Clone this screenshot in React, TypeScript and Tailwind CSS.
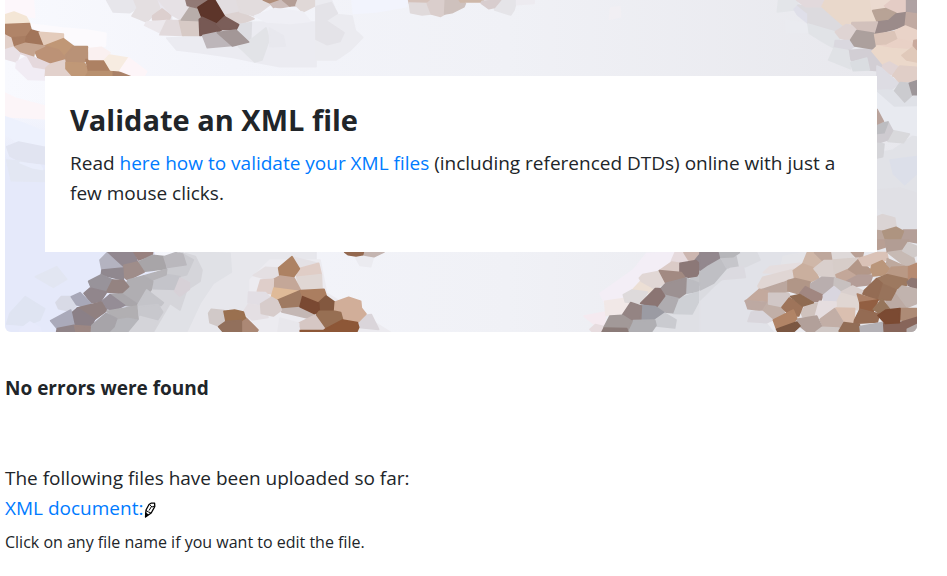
type Cell = [fill: string, points: string];

const topLeft: Cell[] = [
  ["#fdf7fb", "15,0 100,0 104,52 70,48 42,36 15,40"],
  ["#fcfafd", "90,72 190,84 260,90 318,100 316,138 266,146 190,116 190,102 118,97"],
  ["#f4e6d6", "15,45 42,36 78,50 90,72 18,76"],
  ["#b08468", "15,74 88,71 94,92 80,110 32,114 15,100"],
  ["#a97d62", "32,114 80,110 76,130 40,142"],
  ["#a2755a", "94,90 118,97 136,140 76,130 80,110"],
  ["#e4ccbc", "118,97 190,102 190,116 134,138"],
  ["#c09776", "190,116 222,140 200,170 176,172 150,150 134,138"],
  ["#bc9276", "134,138 176,150 200,180 150,193 116,178 104,152"],
  ["#c6a590", "40,142 76,130 134,138 104,152 100,172 60,158"],
  ["#e2d0c9", "15,106 32,114 40,142 15,150"],
  ["#e9e1e6", "15,150 40,142 60,160 50,186 15,176"],
  ["#f1ecf4", "50,186 82,168 100,200 136,206 136,240 84,238 48,204"],
  ["#e5d8dc", "62,160 100,172 150,193 136,206 100,200 82,168"],
  ["#e2d1cc", "150,193 196,180 198,206 216,228 136,228 138,204"],
  ["#b99277", "220,140 262,140 267,178 244,190 200,188 196,166"],
  ["#c09877", "198,188 254,190 266,212 258,226 216,226 198,206"],
  ["#ad8163", "258,179 312,178 332,213 266,215"],
  ["#b8906f", "266,215 340,215 358,228 258,228"],
  ["#a98168", "340,215 364,213 400,228 340,228"],
  ["#faf0f0", "267,146 304,142 330,158 316,178 267,178"],
  ["#f7ece1", "314,180 328,165 384,174 386,190 360,212 332,210"],
  ["#fdf5f8", "386,174 440,214 432,228 400,228 360,212"],
  ["#ebebf1", "530,150 600,158 700,172 764,186 840,200 948,200 948,66 750,66 600,110 500,114"],
  ["#e7e6eb", "320,0 402,0 412,24 390,38 340,36"],
  ["#e4dfe1", "402,0 475,0 486,18 458,48 440,66 396,48 412,24"],
  ["#e9e6ed", "475,0 512,20 515,60 486,28"],
  ["#dccfce", "486,27 512,46 508,62 458,60 458,48"],
  ["#ece8ec", "440,66 500,62 480,98 434,76"],
  ["#e2dadc", "500,62 540,62 550,106 480,104"],
  ["#e6e1e5", "475,0 560,0 570,22 544,60 515,44"],
  ["#d7cac6", "538,62 598,62 600,106 548,106"],
  ["#b8adaa", "544,60 570,22 602,28 606,62"],
  ["#927a76", "558,0 626,0 594,24 562,16"],
  ["#e2dde0", "644,0 710,0 720,36 674,44"],
  ["#dcd2d1", "674,46 722,36 762,56 716,74"],
  ["#dddde2", "716,74 754,68 752,116 742,122 708,90"],
  ["#e2dcdd", "710,0 796,0 812,12 764,48 720,36"],
  ["#e2e3e7", "716,140 746,124 798,84 808,118 786,180 764,186"],
  ["#5d352a", "628,0 644,0 674,50 650,72 604,48 594,22"],
  ["#775954", "598,58 606,52 650,72 666,88 650,100 600,106"],
  ["#7b5e59", "650,72 674,50 716,74 708,90 666,88"],
  ["#bdb6ba", "608,107 650,98 698,136 622,143"],
  ["#a39797", "652,98 708,90 746,126 698,138"],
  ["#b08d79", "790,0 846,0 812,10"],
  ["#cdbdba", "812,12 846,0 870,18 824,26"],
  ["#b49e96", "848,0 894,0 888,16 870,18"],
  ["#e0d8d7", "894,0 948,0 948,16 908,36 888,16"],
  ["#efeff5", "764,48 824,26 908,36 930,64 870,70 800,66"],
  ["#e8e8ee", "808,84 850,108 856,138 810,140"],
];

const topMiddle: Cell[] = [
  ["#ebebf0", "0,0 46,0 64,44 108,48 118,92 140,112 104,150 60,180 0,180"],
  ["#e4e3e8", "0,20 46,8 64,40 30,62 84,98 72,124 34,134 0,118"],
  ["#f2f4fd", "108,0 276,0 270,20 180,36 112,40"],
  ["#d5c2bb", "278,0 346,0 334,11 280,9"],
  ["#e0dadb", "280,9 334,11 346,42 318,45 284,38"],
  ["#dacecc", "334,11 346,0 388,0 386,42 374,49 346,42"],
  ["#e5e4e8", "554,0 602,0 594,30 584,45 536,30 536,22"],
  ["#cec1bd", "388,0 430,0 448,10 444,20 408,38 386,42"],
  ["#ceb8a9", "430,0 502,0 496,6 434,6"],
  ["#d8cdce", "498,4 554,0 536,22 518,26 496,10"],
  ["#edebf0", "602,0 655,0 654,10 602,14"],
  ["#f1eff3", "884,24 912,20 914,50 880,58"],
];

const topRight: Cell[] = [
  ["#eaebf0", "460,60 528,72 530,96 464,98"],
  ["#e3e5e9", "440,0 494,0 498,16 486,30 436,36"],
  ["#dfdfe9", "486,28 500,14 528,40 528,70 496,44"],
  ["#dcdade", "498,16 520,18 570,20 600,50 636,76 612,96 528,70 528,40"],
  ["#e2d9dc", "494,0 580,0 570,20 520,20"],
  ["#e9d8cb", "580,0 720,0 724,30 738,64 660,68 634,76 602,48 570,20"],
  ["#ebdad0", "716,0 780,0 758,18 762,28 720,32"],
  ["#e4ccc5", "780,0 824,0 824,38 790,40 758,18"],
  ["#afa2a3", "824,0 855,0 855,40 824,38"],
  ["#b8a396", "722,32 762,26 792,40 770,60 736,66"],
  ["#9b8b8a", "736,66 770,62 792,42 824,38 820,78 726,104"],
  ["#c1aaa2", "824,38 855,42 855,92 820,76"],
  ["#e1e3e7", "528,72 610,96 624,114 606,144 570,124 532,100"],
  ["#d2c1bc", "660,68 736,66 726,100 674,92 658,80"],
  ["#dfd4d3", "610,96 642,74 658,76 674,92 654,122 624,114"],
  ["#dad8df", "610,122 652,122 668,138 648,152 606,148"],
  ["#d2ced4", "648,152 720,146 720,154 754,194 738,212 712,210 700,174 658,182"],
  ["#aca09d", "656,120 674,92 726,100 736,140 720,146 668,138"],
  ["#dbc4b8", "728,104 790,94 800,116 764,136 734,138"],
  ["#e9d3c8", "790,92 820,78 855,92 855,126 840,122 800,118"],
  ["#e9d1c6", "734,138 764,136 800,118 846,128 842,144 780,146"],
  ["#ebd8ca", "720,154 736,138 780,146 840,150 810,170 855,186 855,204 800,202 754,194"],
  ["#e0c9ba", "810,166 844,140 855,152 855,186 824,180"],
  ["#c9aa9d", "846,122 855,120 855,148 844,136"],
  ["#e0e2e6", "606,144 648,152 656,206 590,180"],
  ["#dadde1", "656,188 704,174 712,210 664,212"],
  ["#e1d4d4", "754,194 772,186 800,202 782,224 748,214"],
  ["#e0cec7", "800,202 855,206 855,240 782,228"],
];

const rightEdge: Cell[] = [
  ["#e1e2e7", "51,280 100,270 171,220 171,508 51,508"],
  ["#dddce3", "51,18 64,24 104,60 120,68 90,92 51,92"],
  ["#e0cec7", "100,46 120,18 171,22 171,62 120,68"],
  ["#e8eaf0", "51,92 104,130 171,138 171,226 94,214 70,184 51,150"],
  ["#dfe1e7", "51,92 80,90 104,92 134,126 171,106 171,136 104,138"],
  ["#cbcbcf", "104,92 120,68 148,70 158,104 134,126"],
  ["#9d9699", "148,70 171,62 171,104 158,104"],
  ["#d9d9dc", "98,212 148,222 130,248 84,244"],
  ["#cecbd0", "84,186 98,212 82,240 51,250 51,222"],
  ["#bdbdc1", "51,192 84,186 72,218 51,220"],
  ["#b9a39c", "51,148 70,184 51,192"],
  ["#d4d4d8", "51,250 72,252 68,290 51,294"],
  ["#dcdfe9", "90,300 171,290 171,340 134,374 100,340"],
  ["#e0e0e5", "51,390 120,384 171,400 171,510 120,508 51,440"],
  ["#dbd4d4", "51,470 66,464 104,474 108,500 68,512 51,508"],
  ["#bba69c", "51,512 70,514 78,542 51,560"],
  ["#b49f98", "130,510 171,510 171,548 120,540"],
  ["#ae9480", "68,514 108,502 130,514 120,540 78,542"],
];

const leftEdge: Cell[] = [
  ["#fcf5f8", "15,100 50,116 126,136 134,138 134,176 15,170"],
  ["#edf1fd", "15,170 70,190 134,216 134,256 50,246 15,220"],
  ["#e1e4f1", "20,260 56,246 134,262 134,312 60,304 30,288"],
  ["#e3e7f3", "20,300 60,304 134,332 134,364 34,362"],
  ["#e9edfb", "60,308 120,316 128,328 100,324"],
];

const bottomLeft: Cell[] = [
  ["#dfe4f2", "30,220 76,170 134,206 120,240 80,256 20,252"],
  ["#e2e6f2", "106,110 170,80 200,118 160,142"],
  ["#e7eafb", "60,268 90,246 120,264 124,276 60,276"],
  ["#e7e7ec", "640,36 948,36 948,276 500,276 540,210 600,120"],
  ["#e0e1e6", "560,36 690,40 694,96 640,130 600,190 560,276 380,276 480,120"],
  ["#d5d5da", "540,36 586,50 606,90 600,124 560,150 540,210 510,190 460,276 370,276 470,120"],
  ["#cbcbd0", "548,42 580,60 560,104 498,120 498,82"],
  ["#b4b3c0", "322,38 372,80 306,90 300,60"],
  ["#928890", "324,36 402,36 412,66 372,80"],
  ["#98817f", "402,36 458,38 456,46 416,60"],
  ["#a8a5a8", "416,66 458,46 492,50 498,86 430,94"],
  ["#bab8bd", "492,50 526,38 548,42 558,74 502,82"],
  ["#9f8d8a", "372,76 412,66 432,96 384,120 368,108"],
  ["#90888f", "306,90 368,84 370,120 304,104"],
  ["#98939a", "266,124 304,104 338,120 320,156 276,148"],
  ["#c4c4ca", "458,120 500,104 540,110 530,148 460,146"],
  ["#b5b3b7", "430,108 500,88 498,104 456,120"],
  ["#b0aeb2", "384,120 430,108 458,124 454,148 414,194 366,162"],
  ["#948381", "338,120 372,122 386,140 364,160 320,156"],
  ["#d7d1d7", "540,114 568,128 568,148 540,168 524,154"],
  ["#91868c", "252,160 270,144 320,156 302,184 274,188"],
  ["#d8dae6", "168,188 184,170 214,170 230,194 214,214 176,206"],
  ["#a8a8b8", "214,170 240,158 272,190 252,202 230,194"],
  ["#a9a6aa", "330,164 366,162 414,194 410,200 374,196"],
  ["#958d96", "306,184 330,164 374,196 346,210 320,206"],
  ["#908080", "232,204 304,186 320,212 284,238 244,216"],
  ["#8b8087", "214,220 232,204 284,238 274,258 222,256"],
  ["#aaaaba", "152,242 212,210 222,256 172,266"],
  ["#908488", "172,266 222,256 228,276 170,276"],
  ["#9c8783", "224,257 270,260 276,276 228,276"],
  ["#c4c4c9", "414,194 440,150 490,188 484,196 414,200"],
  ["#c8c8cd", "414,200 474,194 488,216 470,244 420,228"],
  ["#d4d4d9", "384,276 420,230 474,244 458,276"],
  ["#b6b6bb", "350,240 384,230 414,238 382,276 326,276"],
  ["#b1afb2", "320,214 410,198 414,236 384,230 350,236"],
  ["#a7a4a9", "276,256 318,220 350,236 342,260 326,276 274,276"],
];

const bottomCentre: Cell[] = [
  ["#ecebf0", "180,276 180,120 240,60 390,60 410,160 600,276"],
  ["#e4dfe2", "190,106 226,82 266,84 270,110 240,120"],
  ["#e4e1e5", "310,52 384,70 328,86"],
  ["#e0cdc6", "328,86 386,70 394,104 320,110"],
  ["#e0d7d4", "320,112 394,104 396,148 332,152"],
  ["#ad8263", "306,50 328,86 310,112 270,108 266,84"],
  ["#c4a798", "252,118 270,108 312,114 332,152 294,156 252,144"],
  ["#dfceca", "202,154 212,120 250,118 248,162"],
  ["#dfba98", "252,144 326,154 262,178 244,172"],
  ["#c4b7b4", "272,202 330,200 376,222 352,234 276,216"],
  ["#9f7a62", "264,180 330,152 338,170 330,198 276,202"],
  ["#ab7e60", "332,152 402,148 408,166 386,188 338,170"],
  ["#83583f", "386,188 408,168 436,188 434,214 388,214"],
  ["#7a4932", "338,170 386,190 388,216 376,222 330,200"],
  ["#d6c7c4", "326,250 378,224 408,262 404,272 334,270"],
  ["#dad5da", "500,252 526,226 544,224 566,268 506,262"],
  ["#d1ae99", "436,186 476,172 512,184 514,204 528,222 500,250 456,236 434,212"],
  ["#976f53", "380,224 388,214 434,214 452,218 458,240 410,266"],
  ["#8d5737", "408,266 458,240 502,248 506,262 500,276 326,276 328,272 400,272"],
  ["#e2dee4", "176,156 226,158 240,172 212,194 174,188"],
  ["#e4dfe3", "160,216 176,192 210,198 234,232 186,240"],
  ["#d7cccb", "212,192 244,172 262,182 274,210 250,228 214,220"],
  ["#d1c9c8", "56,220 64,208 102,212 112,240 86,258 60,248"],
  ["#ab8875", "154,242 168,234 204,270 200,276 154,276"],
  ["#9a704f", "102,214 134,210 160,216 166,234 154,242 108,244"],
  ["#92705c", "86,260 108,244 154,242 154,276 100,276"],
  ["#e8e7ec", "264,276 270,234 326,250 326,276"],
  ["#ebebf0", "498,54 518,44 550,52 542,80 510,76"],
  ["#c4b5b1", "520,36 582,36 552,50 518,44"],
  ["#93684f", "464,36 520,36 518,44 498,48 474,44"],
];

const bottomDiagonal: Cell[] = [
  ["#dfe0e5", "450,276 560,150 660,60 660,276"],
  ["#f3eef6", "400,90 440,40 526,36 520,64 420,116 390,170 315,190 300,160"],
  ["#f5eaf0", "252,228 316,216 314,254 284,254"],
  ["#e6dadd", "526,36 552,38 568,60 540,68 514,64"],
  ["#ccb6b0", "552,38 604,38 584,62 566,60"],
  ["#c4c4c8", "570,112 610,78 660,64 660,112 614,150"],
  ["#91878d", "584,62 604,38 656,38 660,50 640,72 610,76"],
  ["#dbcbc7", "478,92 516,66 540,70 540,98"],
  ["#8c7877", "540,70 588,62 608,80 590,108 550,114 540,98"],
  ["#ecdfd5", "396,152 424,122 462,146 442,160"],
  ["#e1d7d5", "418,114 428,104 478,94 498,128 464,146 424,124"],
  ["#a28a82", "478,92 544,98 556,114 498,130"],
  ["#f1e8e7", "314,184 370,176 392,186 368,222 318,226"],
  ["#dedadb", "370,164 396,150 442,156 424,190 376,186"],
  ["#bcbcc1", "558,114 612,136 616,150 556,160"],
  ["#ced0d5", "520,220 540,174 614,150 576,222"],
  ["#9c9192", "480,148 498,130 558,114 556,160 536,174 494,164"],
  ["#afacb0", "470,200 494,166 534,176 518,218 490,216"],
  ["#8b7573", "422,190 466,146 480,146 494,168 470,200"],
  ["#9b9ba3", "424,196 466,200 492,218 470,238 422,240"],
  ["#948483", "368,224 392,188 424,198 422,240 396,244"],
  ["#cacbd0", "466,240 494,220 528,240 524,264 468,258"],
  ["#b0afb3", "384,264 400,242 464,240 468,256 454,276 386,276"],
  ["#e7dcdf", "270,268 286,254 312,260 306,276 278,276"],
  ["#a29998", "312,262 330,228 368,226 396,244 384,270"],
  ["#8b7b78", "312,264 380,266 384,276 306,276"],
];

const bottomRight: Cell[] = [
  ["#e1e2e8", "0,140 40,110 110,60 110,36 310,36 280,90 140,180 220,276 0,276"],
  ["#dadbe0", "100,38 170,38 180,60 136,80 110,80 40,140 0,180 0,150"],
  ["#e4e4e8", "250,50 318,36 302,84 244,76"],
  ["#bfbfc4", "0,92 58,54 80,84 40,130 0,150"],
  ["#c6c6cb", "64,54 108,50 114,80 80,84"],
  ["#b6b6ba", "54,38 118,38 100,50 58,52"],
  ["#93888e", "0,36 54,38 58,54 20,76 0,90"],
  ["#dbdae0", "64,118 90,86 130,80 136,112"],
  ["#e5dedf", "190,98 210,80 300,70 280,100"],
  ["#e0d6d4", "174,138 188,112 282,88 284,116 250,130 178,148"],
  ["#cfb7a8", "308,72 322,38 344,38 368,62 342,84"],
  ["#bea79c", "344,38 396,36 400,62 368,62"],
  ["#ded9d9", "396,36 454,36 460,54 400,60"],
  ["#b9a095", "454,36 490,36 486,54 470,54"],
  ["#caaf9e", "280,92 308,72 342,84 356,114 330,126 284,116"],
  ["#d9cfcc", "342,86 372,62 404,62 404,110 360,108"],
  ["#d7cdc9", "400,60 476,54 450,90 404,108"],
  ["#bba79f", "176,152 250,128 264,122 264,154 240,160"],
  ["#b19687", "264,122 286,116 330,126 330,142 298,162 264,152"],
  ["#b9aeae", "332,132 366,112 404,114 402,140 370,166 332,144"],
  ["#c3a799", "408,104 446,88 474,92 472,106 440,124 410,114"],
  ["#b39788", "446,88 476,58 512,90 510,102 474,106"],
  ["#b49d97", "440,124 474,106 518,106 508,134 456,140"],
  ["#c7c0bf", "404,114 450,130 450,142 424,156 402,140"],
  ["#dac2b7", "476,56 531,38 560,38 564,56 522,78 488,76"],
  ["#ba967b", "512,90 516,76 546,62 570,84 554,104 520,108"],
  ["#b89f94", "533,0 560,0 558,20 533,28"],
  ["#b29d94", "556,0 626,0 610,32 562,36"],
  ["#c7bab4", "564,38 606,32 640,50 646,72 618,80"],
  ["#d0cac9", "624,8 652,20 652,46 640,50 608,32"],
  ["#bea99e", "562,56 616,80 572,84 560,72"],
  ["#b99985", "560,104 574,82 626,80 624,118 584,110"],
  ["#b68b72", "626,80 652,70 652,114 626,118"],
  ["#c3a99d", "136,184 178,148 206,154 206,184 142,180"],
  ["#bda9a2", "136,182 206,188 190,212 144,206"],
  ["#d9d6dc", "144,244 154,216 190,214 218,240 200,248"],
  ["#c1afa7", "190,210 206,184 250,204 254,228 220,236"],
  ["#d1c7c6", "206,160 266,160 270,168 248,200 206,192"],
  ["#9d7960", "530,116 560,104 622,118 620,136 588,148 546,132"],
  ["#8d7672", "622,126 634,116 652,118 652,150 626,136"],
  ["#bcaaa3", "558,184 586,160 620,196 618,208 570,206"],
  ["#c1b3ae", "588,156 606,138 652,148 652,190 622,202"],
  ["#98735b", "530,180 546,132 588,150 572,180"],
  ["#946c54", "488,156 530,116 546,130 530,180 484,160"],
  ["#a18781", "300,160 316,140 368,166 362,184 338,184"],
  ["#d9d6df", "370,166 402,140 424,158 410,184 372,184"],
  ["#d9cfcd", "424,156 458,138 488,152 474,182"],
  ["#e0d6d2", "408,190 424,160 474,174 478,210 410,200"],
  ["#cfc2bd", "304,218 320,192 354,190 346,234 308,230"],
  ["#e5dddf", "346,228 358,184 408,186 408,204 372,236"],
  ["#9e745a", "246,202 268,174 308,198 296,228 272,228"],
  ["#8f6b52", "272,170 300,164 340,188 308,198"],
  ["#dabfb0", "408,204 464,206 462,246 432,248"],
  ["#c2aea6", "360,238 404,206 430,248 424,262 370,262"],
  ["#ac8066", "472,162 530,180 480,190"],
  ["#925f42", "480,188 534,180 518,218 480,208"],
  ["#96755b", "520,208 546,178 572,212 542,222"],
  ["#ad8b76", "592,238 600,206 650,206 652,230 620,242"],
  ["#87655a", "548,250 600,248 652,232 652,254 622,276 548,276"],
  ["#946b53", "464,240 480,208 538,222 532,246 462,250"],
  ["#7b4a32", "534,226 558,210 600,206 598,248 556,250"],
  ["#b2a09a", "290,238 350,228 366,262 350,276 322,276 300,258"],
  ["#b18466", "220,240 280,210 290,234 280,250 230,268"],
  ["#7b5742", "230,268 290,246 300,258 280,276 234,276"],
  ["#d0c8c6", "348,276 366,262 416,264 418,276"],
  ["#926d56", "418,272 432,248 478,254 480,276 418,276"],
  ["#b4b1b6", "480,260 546,248 548,276 482,276"],
  ["#b3aaa9", "622,268 650,254 650,276 622,276"],
];

function Cells({ x, y, cells }: { x: number; y: number; cells: Cell[] }) {
  return (
    <g transform={`translate(${x} ${y}) scale(0.33333)`} strokeWidth="5" strokeLinejoin="round">
      {cells.map(([fill, points], i) => (
        <polygon key={i} fill={fill} stroke={fill} points={points} />
      ))}
    </g>
  );
}

function Mosaic() {
  return (
    <svg
      aria-hidden="true"
      className="absolute inset-0 h-full w-full"
      viewBox="5 0 912 332"
      preserveAspectRatio="xMidYMid slice"
    >
      <defs>
        <linearGradient id="base" x1="0" x2="1" y1="0" y2="0">
          <stop offset="0" stopColor="#f8f9fe" />
          <stop offset="0.25" stopColor="#f3f4fa" />
          <stop offset="0.55" stopColor="#f0f1f6" />
          <stop offset="1" stopColor="#e7e7ec" />
        </linearGradient>
        <linearGradient id="cool" x1="0" x2="0" y1="0" y2="1">
          <stop offset="0.3" stopColor="#e5e9fa" stopOpacity="0" />
          <stop offset="0.5" stopColor="#e5e9fa" />
        </linearGradient>
      </defs>
      <rect x="5" width="912" height="332" fill="url(#base)" />
      <rect x="5" width="150" height="332" fill="url(#cool)" />
      <Cells x={0} y={0} cells={topLeft} />
      <Cells x={316} y={0} cells={topMiddle} />
      <Cells x={632} y={0} cells={topRight} />
      <Cells x={0} y={60} cells={leftEdge} />
      <Cells x={860} y={60} cells={rightEdge} />
      <Cells x={0} y={240} cells={bottomLeft} />
      <Cells x={190} y={240} cells={bottomCentre} />
      <Cells x={500} y={240} cells={bottomDiagonal} />
      <Cells x={700} y={240} cells={bottomRight} />
    </svg>
  );
}

function PencilIcon() {
  return (
    <svg aria-hidden="true" className="mt-1 h-4 w-3" viewBox="0 0 12 16" fill="none">
      <path d="M2 8 5 2.5 7 1.2 10.6 1.2 10.8 4.5 7.2 11 1.5 15Z" fill="#fff" stroke="#000" strokeWidth="1.3" strokeLinejoin="round" />
      <path d="M5.5 2.6 8 5 10.5 4M5 8.5 7.5 4.5M2 8.5 4.5 10 6.8 10.8" stroke="#000" strokeWidth="1" />
      <path d="M1 10 4.8 12.6 1 15.8Z" fill="#000" />
    </svg>
  );
}

export default function App() {
  return (
    <main className="pr-[30px] pl-[5px] font-['Open_Sans','Noto_Sans',sans-serif] text-[19px] leading-[30px] text-[#212529]">
      <section className="relative overflow-hidden rounded-b-md px-10 pt-[76px] pb-20">
        <Mosaic />
        <div className="relative bg-white px-[25px] pt-6 pb-11">
          <h1 className="mb-2 text-[29px] leading-10 font-bold">Validate an XML file</h1>
          <p>
            Read{" "}
            <a href="#help" className="text-[#007bff]">
              here how to validate your XML files
            </a>{" "}
            (including referenced DTDs) online with just a few mouse clicks.
          </p>
        </div>
      </section>
      <h2 className="mt-[41px] font-bold">No errors were found</h2>
      <p className="mt-[60px]">The following files have been uploaded so far:</p>
      <a href="#edit" className="flex w-fit items-center gap-px text-[#007bff]">
        XML document:
        <PencilIcon />
      </a>
      <p className="mt-1 text-[16px]">Click on any file name if you want to edit the file.</p>
    </main>
  );
}
